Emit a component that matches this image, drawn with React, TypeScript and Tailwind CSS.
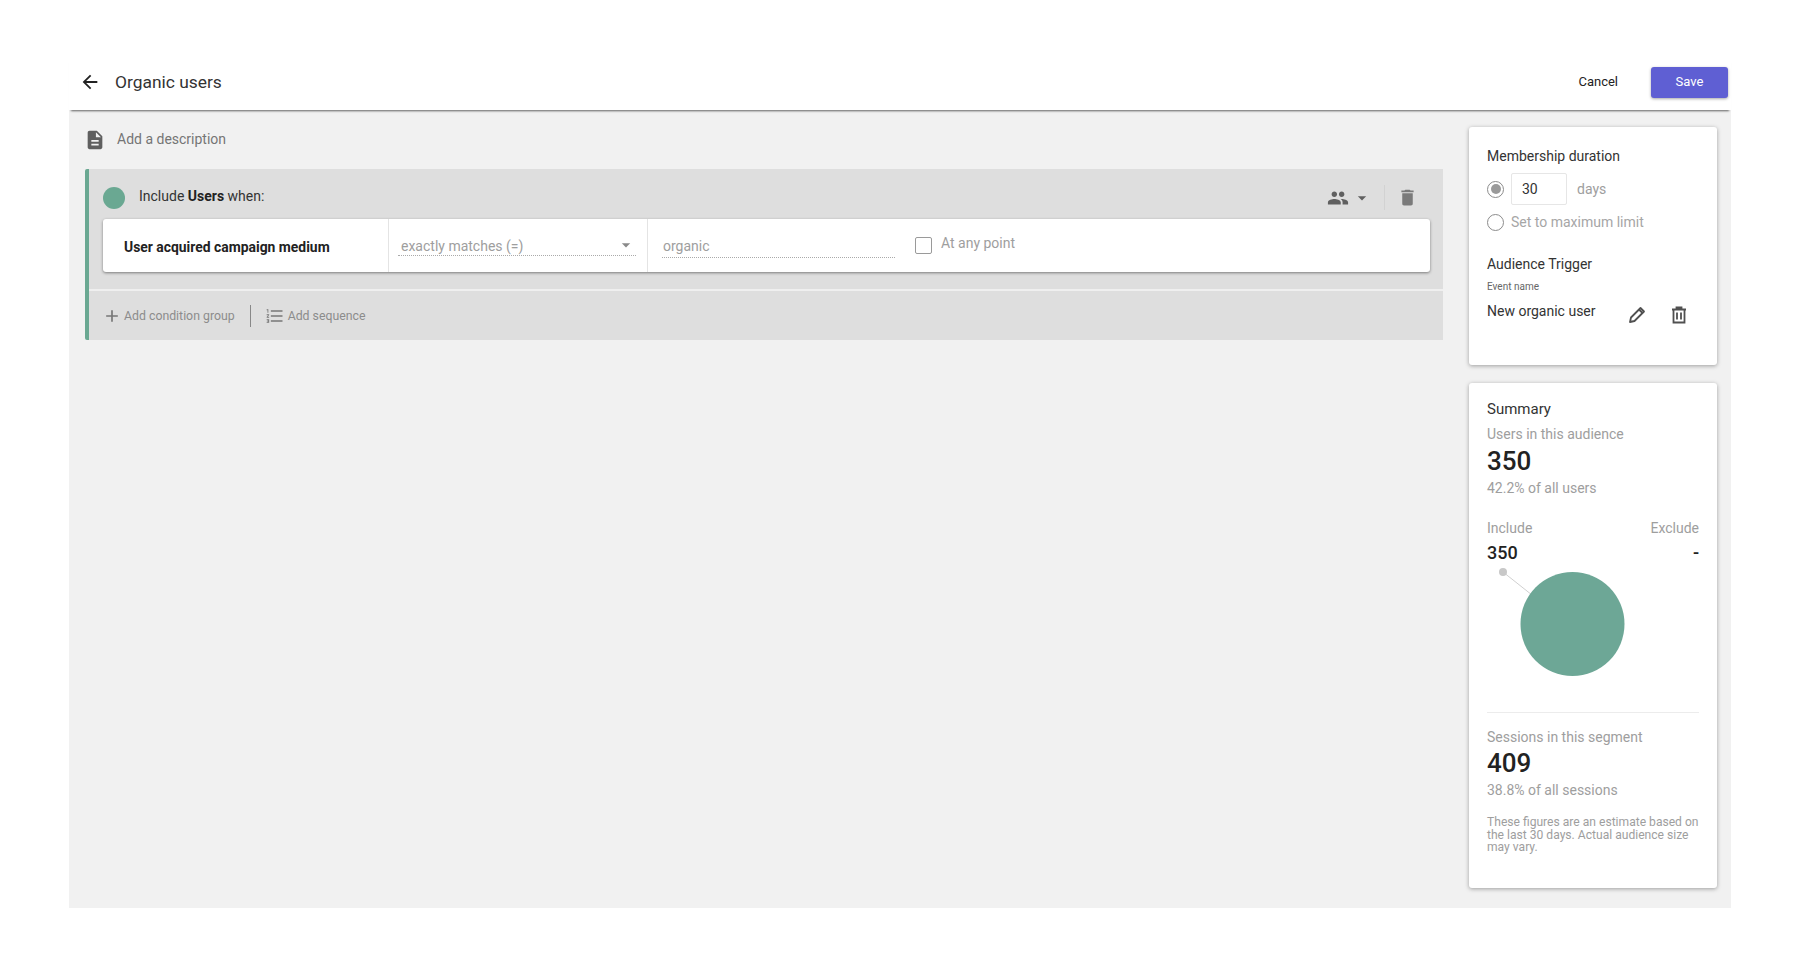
import React from "react";
import { MdArrowBack, MdDescription, MdPeople, MdArrowDropDown, MdDelete, MdAdd, MdFormatListNumbered } from "react-icons/md";

const Pencil = () => (
  <svg width="18" height="18" viewBox="0 0 18 18" fill="none" stroke="#505050" strokeWidth="1.800" strokeLinejoin="round">
    <path d="M2 16l1-4.500L12.500 2 16 5.500 6.500 15z" />
    <path d="M11 3.500L14.500 7" />
  </svg>
);

const Trash = () => (
  <svg width="16" height="18" viewBox="0 0 16 18" fill="none" stroke="#505050" strokeWidth="1.800">
    <path d="M1 3.500h14M5.500 3V1.500h5V3M2.500 3.500V16.500h11V3.500" />
    <path d="M6 6.500v7M10 6.500v7" />
  </svg>
);

export default function App() {
  return (
    <div className="h-[963px] bg-white px-[69px] pt-[58px] font-['Roboto',sans-serif]">
      <header className="h-[52px] flex items-center justify-between relative z-10 shadow-[0_3px_2px_-2px_rgba(0,0,0,0.6)] bg-white">
        <div className="flex items-center pl-[10px] pb-[4px]">
          <MdArrowBack size={22} color="#222" />
          <span className="ml-[14px] text-[17.400px] text-[#333]">Organic users</span>
        </div>
        <div className="flex items-center pr-[3px] pb-[4px]">
          <span className="text-[13px] text-[#222] mr-[33px]">Cancel</span>
          <div className="w-[77px] h-[31px] rounded-[3px] bg-[#5f5fd3] text-white text-[13px] flex items-center justify-center shadow-[0_1px_3px_rgba(0,0,0,0.35)]">Save</div>
        </div>
      </header>
      <main className="h-[798px] bg-[#f1f1f1] flex">
        <section className="w-[1374px] pl-[16px]">
          <div className="h-[59px] flex items-center">
            <MdDescription size={22} color="#5f5f5f" className="ml-[-1px]" />
            <span className="ml-[11px] text-[14px] text-[#757575]">Add a description</span>
          </div>
          <div className="w-[1358px] h-[171px] bg-[#dedede] border-l-[4px] border-[#6aa892] pl-[14px] flex flex-col rounded-l-[2px]">
            <div className="h-[50px] flex items-center pr-[25px]">
              <div className="w-[22px] h-[22px] rounded-full bg-[#6aa892] mt-[7px]" />
              <div className="ml-[14px] text-[14px] text-[#333] mt-[4px]">Include <b className="font-bold text-[#222]">Users</b> when:</div>
              <div className="ml-auto flex items-center pt-[7px]">
                <MdPeople size={22} color="#606060" />
                <MdArrowDropDown size={20} color="#606060" className="ml-[3px]" />
                <div className="w-px h-[25px] bg-[#d2d2d2] mx-[12px]" />
                <MdDelete size={21} color="#7a7a7a" />
              </div>
            </div>
            <div className="w-[1327px] h-[53px] bg-white rounded-[3px] shadow-[0_1px_3px_rgba(0,0,0,0.45)] flex">
              <div className="w-[286px] border-r border-[#e4e4e4] flex items-center pl-[21px] pt-[3px] text-[13.900px] font-bold text-[#222]">User acquired campaign medium</div>
              <div className="w-[259px] border-r border-[#e4e4e4] pl-[9px] pr-[11px] pt-[9px]">
                <div className="h-[28px] border-b border-dotted border-[#aaa] flex items-center justify-between pl-[3px]">
                  <span className="text-[14px] text-[#9e9e9e] mt-[10px]">exactly matches (=)</span>
                  <MdArrowDropDown size={20} color="#8a8a8a" className="mr-[0px] mt-[7px]" />
                </div>
              </div>
              <div className="w-[233px] ml-[14px] pt-[11px]">
                <div className="h-[28px] border-b border-dotted border-[#aaa] flex items-center pl-[1px]">
                  <span className="text-[14px] text-[#9e9e9e] mt-[6px]">organic</span>
                </div>
              </div>
              <div className="flex items-start ml-[20px] pt-[18px]">
                <div className="w-[17px] h-[17px] border border-[#9a9a9a] rounded-[2px]" />
                <span className="ml-[9px] text-[14px] text-[#9e9e9e] mt-[-4px]">At any point</span>
              </div>
            </div>
            <div className="h-[2px] bg-[#efefef] mt-[17px] ml-[-14px]" />
            <div className="flex-1 flex items-center text-[12.300px] text-[#8c8c8c] pt-[1px]">
              <MdAdd size={20} color="#777" className="ml-[-1px]" />
              <span className="ml-[2px]">Add condition group</span>
              <div className="w-px h-[22px] bg-[#888] ml-[15px] mr-[15px]" />
              <MdFormatListNumbered size={20} color="#777" className="ml-[-1px]" />
              <span className="ml-[3px]">Add sequence</span>
            </div>
          </div>
        </section>
        <aside className="w-[248px] ml-[26px] pt-[17px] flex flex-col gap-[18px]">
          <div className="h-[238px] bg-white rounded-[3px] shadow-[0_1px_4px_rgba(0,0,0,0.35)] px-[18px] pt-[20px]">
            <div className="text-[14px] leading-[18px] text-[#333]">Membership duration</div>
            <div className="flex items-center mt-[8px] h-[32px]">
              <div className="w-[17px] h-[17px] rounded-full border border-[#8c8c8c] flex items-center justify-center">
                <div className="w-[10px] h-[10px] rounded-full bg-[#9a9a9a]" />
              </div>
              <div className="ml-[7px] w-[56px] h-[32px] border border-[#e6e6e6] rounded-[2px] flex items-center pl-[10px] text-[14px] text-[#333]">30</div>
              <span className="ml-[10px] text-[14px] text-[#9e9e9e]">days</span>
            </div>
            <div className="flex items-center mt-[8px] h-[18px]">
              <div className="w-[17px] h-[17px] rounded-full border border-[#8c8c8c]" />
              <span className="ml-[7px] text-[14px] text-[#a6a6a6]">Set to maximum limit</span>
            </div>
            <div className="text-[14px] leading-[18px] text-[#333] mt-[24px]">Audience Trigger</div>
            <div className="text-[10px] leading-[12px] text-[#666] mt-[8px]">Event name</div>
            <div className="flex items-start mt-[9px]">
              <span className="text-[14px] leading-[18px] text-[#333] w-[141px]">New organic user</span>
              <div className="mt-[4px]"><Pencil /></div>
              <div className="ml-[25px] mt-[4px]"><Trash /></div>
            </div>
          </div>
          <div className="h-[505px] bg-white rounded-[3px] shadow-[0_1px_4px_rgba(0,0,0,0.35)] px-[18px] pt-[17px]">
            <div className="text-[15px] leading-[18px] text-[#333]">Summary</div>
            <div className="text-[14px] leading-[18px] text-[#9e9e9e] mt-[7px]">Users in this audience</div>
            <div className="text-[26px] leading-[30px] text-[#222] mt-[3px] font-medium">350</div>
            <div className="text-[14px] leading-[18px] text-[#9e9e9e] mt-[3px]">42.2% of all users</div>
            <div className="flex justify-between text-[14px] leading-[18px] text-[#9e9e9e] mt-[22px]">
              <span>Include</span><span>Exclude</span>
            </div>
            <div className="flex justify-between text-[18px] leading-[22px] font-medium text-[#222] mt-[5px]">
              <span>350</span><span>-</span>
            </div>
            <svg width="212" height="118" viewBox="0 0 212 118" className="block">
              <line x1="16" y1="8" x2="45" y2="31" stroke="#d0d0d0" strokeWidth="1" />
              <circle cx="16" cy="8" r="4" fill="#c8c8c8" />
              <circle cx="85.500" cy="60" r="52" fill="#6da796" />
            </svg>
            <div className="h-px bg-[#ececec] mt-[30px]" />
            <div className="text-[14px] leading-[18px] text-[#9e9e9e] mt-[15px]">Sessions in this segment</div>
            <div className="text-[26px] leading-[30px] text-[#222] mt-[2px] font-medium">409</div>
            <div className="text-[14px] leading-[18px] text-[#9e9e9e] mt-[3px]">38.8% of all sessions</div>
            <div className="text-[12.100px] leading-[12.500px] text-[#9e9e9e] mt-[17px]">These figures are an estimate based on the last 30 days. Actual audience size may vary.</div>
          </div>
        </aside>
      </main>
    </div>
  );
}
